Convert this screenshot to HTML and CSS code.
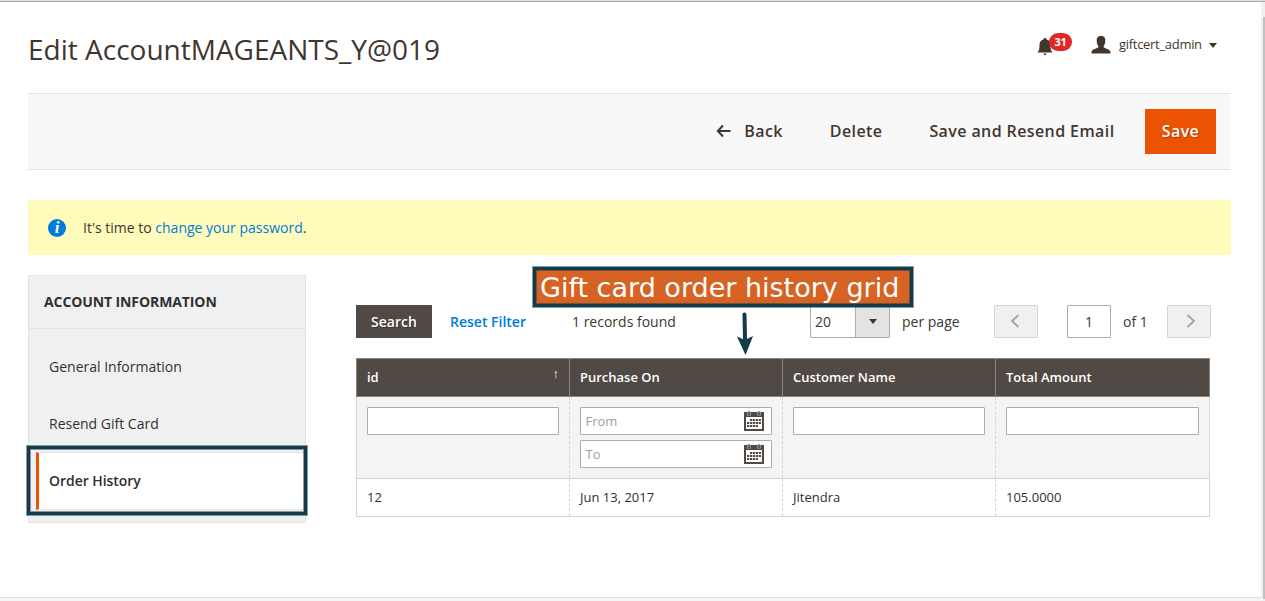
FILE: index.html
```html
<!DOCTYPE html>
<html lang="en">
<head>
<meta charset="utf-8">
<title>Edit Account</title>
<link rel="stylesheet" href="styles.css">
</head>
<body>
<svg class="sprite" aria-hidden="true">
  <symbol id="calendar" viewBox="0 0 22 21">
    <path fill="#514943" fill-rule="evenodd" d="M1 1h20v19H1zM3 6v12h16V6z"/>
    <path fill="none" stroke="#fff" stroke-width="3.400" d="M6 0v4.500M16 0v4.500"/>
    <path fill="none" stroke="#514943" stroke-width="1.300" stroke-linecap="round" d="M5.200 .8v3h1.600v-3M15.200 .8v3h1.600v-3"/>
    <path fill="none" stroke="#514943" stroke-width="2" stroke-dasharray="2.300 .7" d="M7 9h11M4 12h14M4 15h11"/>
  </symbol>
</svg>
<div class="page">
  <header class="header">
    <h1 class="title">Edit AccountMAGEANTS_Y@019</h1>
    <div class="user">
      <div class="bell">
        <svg width="16" height="18" viewBox="0 0 16 18"><path fill="#41362f" d="M8 0c1 0 1.500.6 1.500 1.400C12.500 2.200 13.500 4 13.500 7c0 4 .5 6 2 7.500H.5C2 13 2.500 11 2.500 7c0-3 1-4.800 4-5.600C6.500.6 7 0 8 0zM6.200 15.500h3.600L8 17.500z"/></svg>
        <span class="badge">31</span>
      </div>
      <svg class="person" width="20" height="18" viewBox="0 0 20 18"><path fill="#41362f" d="M10 0c3.200 0 4.300 1.800 4.300 4.200 0 3.400-.8 4.600-1.600 5.800v1.200c.4 1 6.800 1.600 6.800 5.400v.9H.5v-.9c0-3.800 6.400-4.400 6.800-5.400V10c-.8-1.200-1.600-2.400-1.600-5.800C5.700 1.800 6.800 0 10 0z"/></svg>
      <span class="username">giftcert_admin</span>
      <i class="caret"></i>
    </div>
  </header>

  <div class="actions">
    <a class="action back"><svg width="15" height="14" viewBox="0 0 15 14"><path fill="none" stroke="#41362f" stroke-width="2" d="M2 7h12.500M7 1.500 1.800 7 7 12.500"/></svg>Back</a>
    <a class="action">Delete</a>
    <a class="action resend">Save and Resend Email</a>
    <button class="save">Save</button>
  </div>

  <div class="notice">
    <span class="info">i</span>
    <p>It's time to <a>change your password</a>.</p>
  </div>

  <main class="main">
    <nav class="tabs">
      <h2>ACCOUNT INFORMATION</h2>
      <ul>
        <li>General Information</li>
        <li>Resend Gift Card</li>
        <li class="active">Order History</li>
      </ul>
      <div class="frame"></div>
    </nav>

    <section class="grid">
      <div class="controls">
        <button class="search">Search</button>
        <a class="reset">Reset Filter</a>
        <span class="count">1 records found</span>
        <div class="select"><span>20</span><b><i class="caret"></i></b></div>
        <span class="per">per page</span>
        <button class="pager"><svg width="10" height="14" viewBox="0 0 10 14"><path d="M8.500 1 2 7l6.500 6"/></svg></button>
        <span class="current">1</span>
        <span class="of">of 1</span>
        <button class="pager next"><svg width="10" height="14" viewBox="0 0 10 14"><path d="M1.500 1 8 7l-6.500 6"/></svg></button>
      </div>
      <div class="row head">
        <div>id<span class="sort">↑</span></div><div>Purchase On</div><div>Customer Name</div><div>Total Amount</div>
      </div>
      <div class="row filters">
        <div><span class="field"></span></div>
        <div>
          <span class="field">From<svg width="22" height="21"><use href="#calendar"/></svg></span>
          <span class="field">To<svg width="22" height="21"><use href="#calendar"/></svg></span>
        </div>
        <div><span class="field"></span></div>
        <div><span class="field"></span></div>
      </div>
      <div class="row data">
        <div>12</div><div>Jun 13, 2017</div><div>Jitendra</div><div>105.0000</div>
      </div>
    </section>
  </main>
  <div class="callout"><span>Gift card order history grid</span></div>
  <svg class="arrow" width="18" height="46" viewBox="0 0 18 46"><path fill="none" stroke="#123c4b" stroke-width="4" stroke-linecap="round" d="M7.500 5.500 8 30"/><path fill="#123c4b" d="M0 27.500 8 31l8-4L8.500 46z"/></svg>
  <div class="track"><div class="thumb"></div></div>
</div>
</body>
</html>
```

FILE: styles.css
```css
* { box-sizing: border-box; }
body { margin: 0; background: #fff; font-family: "Open Sans", "Noto Sans", sans-serif; font-size: 14px; line-height: 20px; color: #41362f; }
h1, h2, p, ul { margin: 0; padding: 0; }
button { border: 0; padding: 0; font: inherit; }
.sprite { display: none; }
.page { position: relative; height: 601px; padding: 0 34px 0 28px; overflow: hidden; border-top: 1px solid #ddd; box-shadow: inset 0 1px #a9a9a9, inset 0 -3px #f5f5f5, inset 0 -4px #ddd; }
.header { display: flex; justify-content: space-between; height: 92px; padding-top: 29px; }
.title { font-size: 28px; line-height: 38px; font-weight: 400; }
.user { display: flex; align-items: flex-start; padding: 1px 14px 0 0; }
.bell { position: relative; width: 35px; height: 25px; padding-top: 7px; margin-right: 18px; }
.bell svg { display: block; margin-left: -1px; }
.badge { position: absolute; left: 11px; top: 2px; width: 23px; height: 18px; border-radius: 9px; background: #e22626; color: #fff; font-size: 11px; line-height: 18px; font-weight: 700; letter-spacing: -.4px; text-align: center; }
.person { margin-top: 5px; }
.username { width: 83px; font-size: 13px; letter-spacing: -.3px; margin: 3px 7px 0 8px; }
.caret { display: inline-block; border: 4px solid transparent; border-top: 5px solid #41362f; border-bottom: 0; }
.user .caret { margin-top: 12px; }
.actions { display: flex; align-items: center; justify-content: flex-end; height: 77px; padding-right: 15px; background: #f8f8f8; border: solid #e3e3e3; border-width: 1px 0; }
.action { padding-bottom: 2px; font-size: 16px; font-weight: 600; letter-spacing: .4px; margin-right: 47px; }
.action.resend { margin-right: 30.500px; }
.back svg { margin-right: 13px; vertical-align: -1px; }
.save { width: 71px; height: 45px; padding-bottom: 2px; background: #eb5202; color: #fff; font-size: 16px; font-weight: 600; letter-spacing: .4px; text-shadow: 1px 1px 0 rgba(0,0,0,.25); }
.notice { display: flex; align-items: center; height: 55px; margin-top: 30px; padding-left: 20px; background: #fffbbb; }
.notice a { color: #007bdb; }
.info { width: 18px; height: 18px; margin-right: 17px; border-radius: 50%; background: #007bdb; color: #fff; font: italic bold 17px/17px "Liberation Serif", serif; text-align: center; }
.main { display: flex; align-items: flex-start; padding-top: 20px; }
.tabs { position: relative; width: 278px; height: 248px; border: 1px solid #e3e3e3; background: #f0f0f0; color: #303030; }
.tabs h2 { height: 53px; padding-left: 15px; border-bottom: 1px solid #e3e3e3; font-size: 14px; line-height: 52px; font-weight: 700; letter-spacing: -.1px; }
.tabs ul { list-style: none; padding: 9px 0 0 7px; }
.tabs li { height: 57px; padding-left: 13px; line-height: 58px; }
.tabs .active { height: 58px; padding-left: 10px; border: solid #e3e3e3; border-width: 1px 0; border-left: 3px solid #eb5202; line-height: 56px; font-weight: 600; letter-spacing: -.05px; background: #fff; }
.frame { position: absolute; left: -2px; top: 170px; width: 280px; height: 69px; border: 3px solid #123c4b; box-shadow: 0 0 0 1px rgba(18,60,75,.5), inset 0 0 0 1px rgba(18,60,75,.5); }
.grid { width: 854px; margin-left: 50px; padding-top: 30px; }
.controls { display: flex; width: 855px; height: 33px; margin-bottom: 20px; line-height: 33px; }
.search { width: 76px; background: #514943; color: #fff; font-weight: 600; text-shadow: 1px 1px 0 rgba(0,0,0,.3); }
.reset { width: 122px; margin-left: 18px; font-weight: 600; color: #007bdb; }
.count { flex: 1; }
.select { display: flex; width: 80px; border: 1px solid #adadad; border-radius: 1px; line-height: 31px; }
.select span { width: 45px; padding-left: 4px; border-right: 1px solid #adadad; }
.select b { display: flex; flex: 1; align-items: center; justify-content: center; background: #e3e3e3; }
.per { width: 104px; padding-left: 12px; }
.pager { display: flex; align-items: center; justify-content: center; width: 44px; border: 1px solid #d6d6d6; border-radius: 1px; background: #f0f0f0; }
.pager path { fill: none; stroke: #a6a3a0; stroke-width: 1.8; }
.pager svg { margin: -2px 2px 0 0; }
.pager.next svg { margin: -2px 0 0 3px; }
.current { width: 44px; margin-left: 29px; border: 1px solid #adadad; border-radius: 1px; line-height: 31px; text-align: center; }
.of { width: 56px; padding-left: 12px; }
.row { display: grid; grid-template-columns: 213px 213px 213px 213px; font-size: 13px; }
.head { height: 39px; background: #514943; border: 1px solid #8a837f; color: #fff; font-weight: 600; line-height: 37px; }
.head > div { display: flex; justify-content: space-between; padding: 0 10px; border-right: 1px solid #8a837f; }
.head > div:last-child { border-right: 0; }
.sort { font-size: 13px; font-weight: 400; line-height: 29px; }
.filters, .data { border: solid #d6d6d6; border-width: 0 1px 1px; }
.filters { height: 82px; background: #f4f4f4; }
.filters > div, .data > div { border-right: 1px dashed #d6d6d6; padding: 0 10px; }
.filters > div { padding-top: 10px; }
.filters > div:last-child, .data > div:last-child { border-right: 0; }
.field { display: flex; justify-content: space-between; height: 28px; margin-bottom: 5px; padding: 0 6px 0 4.500px; border: 1px solid #adadad; border-radius: 1px; background: #fff; color: #9e9e9e; line-height: 26px; }
.field svg { margin-top: 3px; }
.data { height: 38px; line-height: 37px; color: #303030; }
.callout { position: absolute; left: 533px; top: 266px; width: 380px; height: 40px; padding-left: 4px; border: 3px solid #123c4b; box-shadow: 0 0 0 1px rgba(18,60,75,.5), inset 0 0 0 1px rgba(18,60,75,.5); background: #d66323; color: #fff; font: 27px/36px "DejaVu Sans", sans-serif; white-space: nowrap; }
.arrow { position: absolute; left: 737px; top: 308px; }
.track { position: absolute; top: 1px; right: 0; bottom: 0; width: 4px; padding: 15px 0 2px 2px; background: #f0f0f0; }
.thumb { height: 100%; background: #c1c1c1; }
```
